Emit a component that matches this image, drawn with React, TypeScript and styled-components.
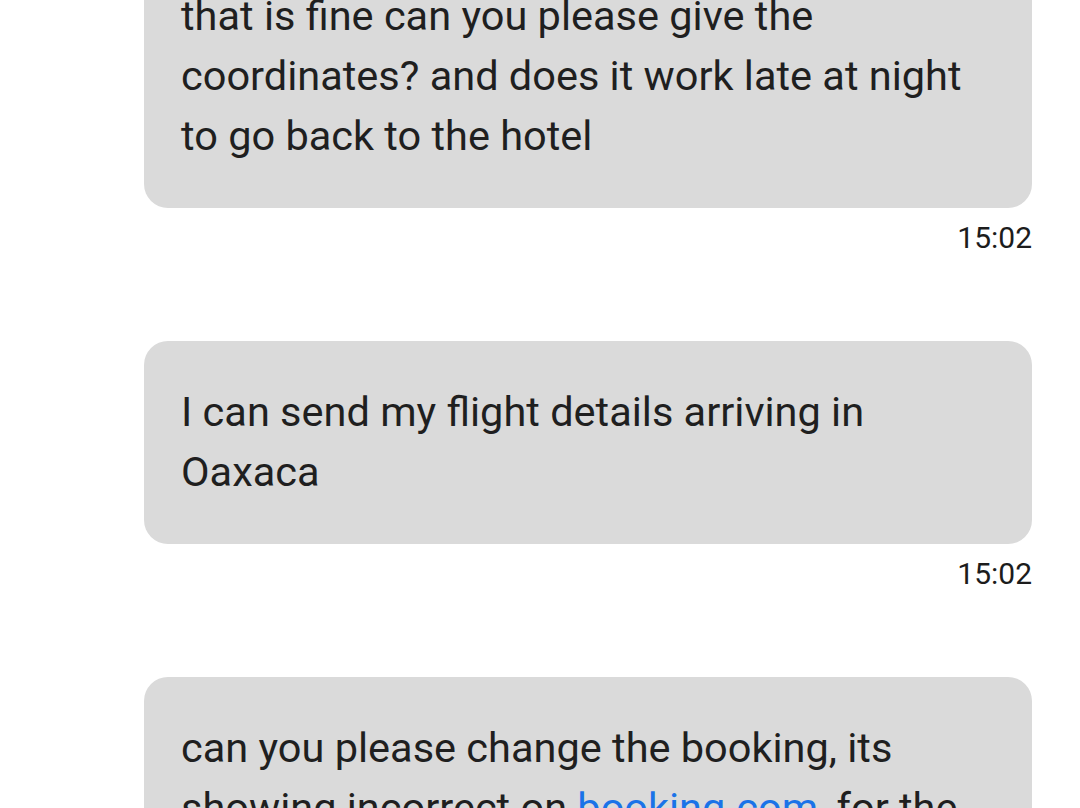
import styled, { createGlobalStyle } from 'styled-components'

const GlobalStyle = createGlobalStyle`
  html, body {
    margin: 0;
    padding: 0;
    background: #ffffff;
    overflow: hidden;
  }
  body {
    font-family: Roboto, "Noto Sans", "Liberation Sans", sans-serif;
    -webkit-font-smoothing: antialiased;
  }
`

const Thread = styled.div`
  display: flex;
  flex-direction: column;
  padding: 0 48px 0 144px;
  margin-top: -55px;
`

const Message = styled.div`
  display: flex;
  flex-direction: column;
  align-items: stretch;
  margin-bottom: 83px;
`

const Bubble = styled.div`
  background: #dadada;
  border-radius: 24px;
  padding: 41px 48px 42px 37px;
  color: #1f1f1f;
  font-size: 41.5px;
  line-height: 60px;
`

const Time = styled.div`
  align-self: flex-end;
  margin-top: 10px;
  font-size: 30px;
  line-height: 40px;
  color: #1c1c1c;
`

const Link = styled.a`
  color: #1a73e8;
  text-decoration: none;
`

type Msg = {
  id: string;
  body: React.ReactNode;
  time?: string;
}

const messages: Msg[] = [
  {
    id: 'm1',
    body: 'that is fine can you please give the coordinates? and does it work late at night to go back to the hotel',
    time: '15:02',
  },
  {
    id: 'm2',
    body: 'I can send my flight details arriving in Oaxaca',
    time: '15:02',
  },
  {
    id: 'm3',
    body: (
      <>
        can you please change the booking, its showing incorrect on <Link href="#">booking.com</Link>, for the
        dates we agreed on
      </>
    ),
  },
]

export default function App() {
  return (
    <>
      <GlobalStyle />
      <Thread>
        {messages.map((m) => (
          <Message key={m.id}>
            <Bubble>{m.body}</Bubble>
            {m.time && <Time>{m.time}</Time>}
          </Message>
        ))}
      </Thread>
    </>
  )
}
